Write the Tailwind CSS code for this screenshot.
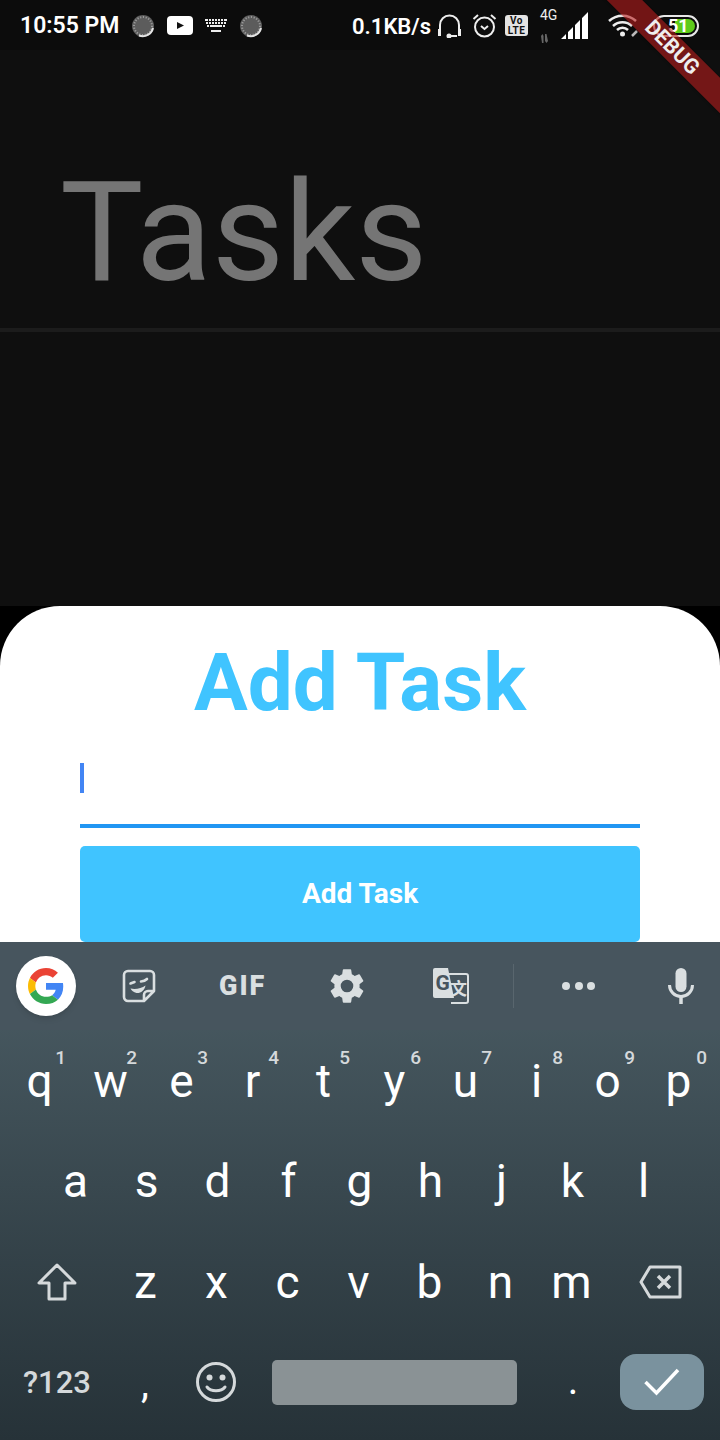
<!DOCTYPE html>
<html lang="en">
<head>
    <!-- Page setup -->
    <meta charset="UTF-8">
    <meta name="viewport" content="width=device-width, initial-scale=1.0">
    <title>Tasks</title>
    <script src="https://cdn.jsdelivr.net/npm/@tailwindcss/browser@4"></script>
</head>
<body class="bg-black font-['Roboto',sans-serif] overflow-hidden">
<div class="relative w-[720px] h-[1440px] overflow-hidden flex flex-col">
    <!-- Status bar -->
    <div class="h-[50px] shrink-0 bg-[#0c0c0c] flex items-center text-white pl-[20px] pt-[1px]">
        <span class="text-[23px] font-semibold w-[111px] whitespace-nowrap pt-[1px]">10:55 PM</span>
        <svg class="w-[24px] h-[24px]" viewBox="0 0 24 24"><circle cx="12" cy="12" r="11" fill="#5c5c5c"/><circle cx="12" cy="12" r="9" fill="none" stroke="#9a9a9a" stroke-width="2" stroke-dasharray="1.2 1.6"/><path d="M22 14a10.5 10.5 0 0 1-14 7.5" fill="none" stroke="#e4e4e4" stroke-width="2"/></svg>
        <svg class="w-[26px] h-[19px] ml-[12px]" viewBox="0 0 26 19"><rect width="26" height="19" rx="4" fill="#fff"/><path d="M10 6l7 3.5L10 13z" fill="#111"/></svg>
        <svg class="w-[22px] h-[14px] ml-[12px]" viewBox="0 0 22 14" fill="#eee"><path d="M0 0h3v2H0zM4 0h2v2H4zM7 0h2v2H7zM10 0h2v2h-2zM13 0h2v2h-2zM16 0h2v2h-2zM19 0h3v2h-3zM1 3h2v2H1zM4 3h2v2H4zM7 3h2v2H7zM10 3h2v2h-2zM13 3h2v2h-2zM16 3h2v2h-2zM19 3h2v2h-2zM2 6h2v2H2zM5 6h12v2H5zM18 6h2v2h-2zM6 11h10v2H6z"/></svg>
        <svg class="w-[24px] h-[24px] ml-[12px]" viewBox="0 0 24 24"><circle cx="12" cy="12" r="11" fill="#5c5c5c"/><circle cx="12" cy="12" r="9" fill="none" stroke="#9a9a9a" stroke-width="2" stroke-dasharray="1.2 1.6"/><path d="M22 14a10.5 10.5 0 0 1-14 7.5" fill="none" stroke="#e4e4e4" stroke-width="2"/></svg>
        <span class="text-[22px] font-semibold ml-[89px] w-[81px] whitespace-nowrap pt-[1px]">0.1KB/s</span>
        <svg class="w-[25px] h-[24px] ml-[4px]" viewBox="0 0 25 24" fill="none" stroke="#eee" stroke-width="2"><path d="M3 18V11a9.5 9.5 0 0 1 19 0v7"/><path d="M1 15h3v7H1zM21 15h3v7h-3z" fill="#eee" stroke="none"/><path d="M11 22h9" /><circle cx="12" cy="22" r="1.5" fill="#eee"/></svg>
        <svg class="w-[25px] h-[25px] ml-[10px]" viewBox="0 0 25 25" fill="none" stroke="#eee" stroke-width="2"><circle cx="12.5" cy="14" r="9.5"/><path d="M9 13l3.5 3 3.5-3M1.5 6L6 2M23.5 6L19 2"/></svg>
        <span class="w-[23px] h-[21px] ml-[8px] rounded-[3px] bg-[#e4e4e4] text-[#111] text-[10px] font-bold leading-[10px] text-center pt-[1px] tracking-[0.5px]">Vo<br>LTE</span>
        <div class="w-[16px] h-[34px] ml-[12px] flex flex-col justify-between">
            <span class="text-[14px] leading-[12px] whitespace-nowrap text-[#eee]">4G</span>
            <svg class="w-[9px] h-[9px]" viewBox="0 0 9 9" fill="#666"><path d="M1 2l1.5-2 1 2v7h-1.5zM5 0h1.5l1.5 7-1.5 2L5 7z"/></svg>
        </div>
        <svg class="w-[28px] h-[27px] ml-[5px]" viewBox="0 0 28 27" fill="#fff"><path d="M0 27L5 22v5zM7 20l5-5v12H7zM14 13l5-5v19h-5zM21 6l6-6v27h-6z"/></svg>
        <svg class="w-[32px] h-[24px] ml-[19px]" viewBox="0 0 32 24" fill="none" stroke="#eee" stroke-width="2.5"><path d="M1 7a20 20 0 0 1 27 0M5 12a14 14 0 0 1 19 0M9 16a8 8 0 0 1 11 0"/><circle cx="14.5" cy="20" r="2.5" fill="#eee" stroke="none"/><path d="M24 22l5-5" stroke-width="2.5" stroke="#bbb"/></svg>
        <div class="relative w-[46px] h-[22px] ml-[13px] rounded-full border-2 border-[#e8e8e8] overflow-hidden">
            <div class="absolute left-[2px] top-[2px] bottom-[2px] w-[38px] rounded-full overflow-hidden"><div class="w-[20px] ml-[18px] h-full bg-[#5ecb1a]"></div></div>
            <span class="absolute left-[13px] top-[-2px] text-[18px] font-bold text-white leading-[22px]">51</span>
        </div>
    </div>

    <!-- Main content, dimmed behind the sheet -->
    <div class="h-[556px] shrink-0 bg-[#0f0f0f]">
        <h1 class="text-[140px] leading-[164px] text-[#757575] pl-[60px] pt-[100px] h-[278px]">Tasks</h1>
        <div class="h-[4px] bg-[#1c1c1c]"></div>
    </div>

    <!-- Bottom sheet -->
    <div class="h-[336px] shrink-0 bg-white rounded-t-[60px] px-[80px]">
        <h2 class="text-[80px] font-bold leading-[94px] text-[#40c4ff] text-center pt-[30px] h-[122px] whitespace-nowrap">Add Task</h2>
        <!-- Input -->
        <div class="h-[77px] border-b-4 border-[#2196f3] pt-[12px] mt-[23px]">
            <div class="w-[4px] h-[30px] bg-[#4285f4]"></div>
        </div>
        <button class="w-full h-[96px] mt-[18px] rounded-[5px] bg-[#40c4ff] text-white text-[28px] font-bold">Add Task</button>
    </div>

    <!-- Keyboard -->
    <div class="h-[498px] shrink-0 bg-gradient-to-b from-[#4c5e66] to-[#263238] text-white">
        <!-- Toolbar -->
        <div class="h-[88px] bg-[#47555e] flex items-center relative">
            <div class="w-[60px] h-[60px] ml-[16px] rounded-full bg-white shadow-md flex items-center justify-center">
                <svg class="w-[36px] h-[36px]" viewBox="0 0 48 48"><path fill="#EA4335" d="M24 9.5c3.5 0 6.7 1.3 9.1 3.5l6.8-6.8C35.8 2.4 30.2 0 24 0 14.6 0 6.5 5.4 2.6 13.2l7.9 6.2C12.4 13.7 17.7 9.5 24 9.5z"/><path fill="#4285F4" d="M46.98 24.55c0-1.57-.15-3.09-.38-4.55H24v9.02h12.94c-.58 2.96-2.26 5.48-4.78 7.18l7.73 6c4.51-4.18 7.09-10.36 7.09-17.65z"/><path fill="#FBBC05" d="M10.53 28.59c-.48-1.45-.76-2.99-.76-4.59s.27-3.14.76-4.59l-7.98-6.19C.92 16.46 0 20.12 0 24c0 3.88.92 7.54 2.56 10.78l7.97-6.19z"/><path fill="#34A853" d="M24 48c6.48 0 11.93-2.13 15.89-5.81l-7.73-6c-2.15 1.45-4.92 2.3-8.16 2.3-6.26 0-11.57-4.22-13.47-9.91l-7.98 6.19C6.51 42.62 14.62 48 24 48z"/></svg>
            </div>
            <svg class="w-[34px] h-[34px] ml-[46px]" viewBox="0 0 34 34" fill="none" stroke="#dadfe1" stroke-width="2.6"><path d="M22 32H6a4 4 0 0 1-4-4V6a4 4 0 0 1 4-4h22a4 4 0 0 1 4 4v16zM22 32v-6a4 4 0 0 1 4-4h6" stroke-linejoin="round"/><path d="M8.5 14.5l4-1.5M19 12.5c2 0 4-.5 6-2.5" stroke-linecap="round"/><path d="M8.5 19.5c5 1 11 0 15-3-1 5-5 8-9 7.5-3-.5-5-2.5-6-4.5z" fill="#dadfe1" stroke="none"/></svg>
            <span class="w-[46px] ml-[63px] text-[#dadfe1] text-[27px] font-black tracking-[2px] leading-none whitespace-nowrap">GIF</span>
            <svg class="w-[42px] h-[42px] ml-[61px]" viewBox="0 0 24 24" fill="#dadfe1"><path d="M19.14 12.94c.04-.3.06-.61.06-.94s-.02-.64-.07-.94l2.03-1.58a.49.49 0 0 0 .12-.61l-1.92-3.32a.49.49 0 0 0-.59-.22l-2.39.96c-.5-.38-1.03-.7-1.62-.94l-.36-2.54a.48.48 0 0 0-.48-.41h-3.84a.48.48 0 0 0-.47.41l-.36 2.54c-.59.24-1.13.57-1.62.94l-2.39-.96a.48.48 0 0 0-.59.22L2.73 8.87a.48.48 0 0 0 .12.61l2.03 1.58c-.05.3-.09.63-.09.94s.02.64.07.94l-2.03 1.58a.49.49 0 0 0-.12.61l1.92 3.32c.12.22.37.29.59.22l2.39-.96c.5.38 1.03.7 1.62.94l.36 2.54c.05.24.24.41.48.41h3.84c.24 0 .44-.17.47-.41l.36-2.54c.59-.24 1.13-.56 1.62-.94l2.39.96c.22.08.47 0 .59-.22l1.92-3.32a.48.48 0 0 0-.12-.61l-2.01-1.58zM12 15.6A3.6 3.6 0 1 1 12 8.4a3.6 3.6 0 0 1 0 7.2z"/></svg>
            <svg class="w-[36px] h-[36px] ml-[65px]" viewBox="0 0 36 36"><path d="M16 6h17a2 2 0 0 1 2 2v25a2 2 0 0 1-2 2H18" fill="none" stroke="#dadfe1" stroke-width="2"/><path d="M2 0h13l6 30H2a2 2 0 0 1-2-2V2a2 2 0 0 1 2-2z" fill="#dadfe1"/><text x="2.5" y="22" font-family="Roboto" font-weight="700" font-size="21" fill="#47555e">G</text><text x="17" y="27" font-family="Noto Sans CJK SC" font-weight="700" font-size="17" fill="#dadfe1">文</text></svg>
            <div class="w-[1px] h-[44px] ml-[44px] bg-white/10"></div>
            <div class="flex gap-[4.5px] ml-[48px]">
                <div class="w-[8px] h-[8px] rounded-full bg-[#dadfe1]"></div>
                <div class="w-[8px] h-[8px] rounded-full bg-[#dadfe1]"></div>
                <div class="w-[8px] h-[8px] rounded-full bg-[#dadfe1]"></div>
            </div>
            <svg class="w-[26px] h-[36px] ml-[73px]" viewBox="0 0 26 36" fill="none"><rect x="7.5" y="0" width="11" height="24" rx="5.5" fill="#dadfe1"/><path d="M1.5 17a11.5 11.5 0 0 0 23 0" stroke="#dadfe1" stroke-width="3"/><path d="M13 28v8" stroke="#dadfe1" stroke-width="3.5"/></svg>
        </div>

        <!-- Row 1 -->
        <div class="h-[101px] flex pl-[4px] text-[46px] leading-none">
            <div class="w-[71px] relative flex items-center justify-center">q<span class="absolute right-[9px] top-[18px] text-[19px] font-medium text-[#d5d9db]">1</span></div>
            <div class="w-[71px] relative flex items-center justify-center">w<span class="absolute right-[9px] top-[18px] text-[19px] font-medium text-[#d5d9db]">2</span></div>
            <div class="w-[71px] relative flex items-center justify-center">e<span class="absolute right-[9px] top-[18px] text-[19px] font-medium text-[#d5d9db]">3</span></div>
            <div class="w-[71px] relative flex items-center justify-center">r<span class="absolute right-[9px] top-[18px] text-[19px] font-medium text-[#d5d9db]">4</span></div>
            <div class="w-[71px] relative flex items-center justify-center">t<span class="absolute right-[9px] top-[18px] text-[19px] font-medium text-[#d5d9db]">5</span></div>
            <div class="w-[71px] relative flex items-center justify-center">y<span class="absolute right-[9px] top-[18px] text-[19px] font-medium text-[#d5d9db]">6</span></div>
            <div class="w-[71px] relative flex items-center justify-center">u<span class="absolute right-[9px] top-[18px] text-[19px] font-medium text-[#d5d9db]">7</span></div>
            <div class="w-[71px] relative flex items-center justify-center">i<span class="absolute right-[9px] top-[18px] text-[19px] font-medium text-[#d5d9db]">8</span></div>
            <div class="w-[71px] relative flex items-center justify-center">o<span class="absolute right-[8px] top-[18px] text-[19px] font-medium text-[#d5d9db]">9</span></div>
            <div class="w-[71px] relative flex items-center justify-center">p<span class="absolute right-[7px] top-[18px] text-[19px] font-medium text-[#d5d9db]">0</span></div>
        </div>
        <!-- Row 2 -->
        <div class="h-[101px] flex pl-[40px] text-[46px] leading-none pb-[1px]">
            <div class="w-[71px] flex items-center justify-center">a</div>
            <div class="w-[71px] flex items-center justify-center">s</div>
            <div class="w-[71px] flex items-center justify-center">d</div>
            <div class="w-[71px] flex items-center justify-center">f</div>
            <div class="w-[71px] flex items-center justify-center">g</div>
            <div class="w-[71px] flex items-center justify-center">h</div>
            <div class="w-[71px] flex items-center justify-center">j</div>
            <div class="w-[71px] flex items-center justify-center">k</div>
            <div class="w-[71px] flex items-center justify-center">l</div>
        </div>
        <!-- Row 3 -->
        <div class="h-[101px] flex text-[46px] leading-none pb-[1px]">
            <div class="w-[110px] flex items-center justify-center">
                <svg class="w-[40px] h-[38px] translate-x-[2px]" viewBox="0 0 40 38" fill="none" stroke="#d5d9db" stroke-width="3" stroke-linejoin="round"><path d="M20 2L2 20h10v16h16V20h10z"/></svg>
            </div>
            <div class="w-[71px] flex items-center justify-center">z</div>
            <div class="w-[71px] flex items-center justify-center">x</div>
            <div class="w-[71px] flex items-center justify-center">c</div>
            <div class="w-[71px] flex items-center justify-center">v</div>
            <div class="w-[71px] flex items-center justify-center">b</div>
            <div class="w-[71px] flex items-center justify-center">n</div>
            <div class="w-[71px] flex items-center justify-center">m</div>
            <div class="w-[107px] flex items-center justify-center">
                <svg class="w-[43px] h-[34px]" viewBox="0 0 43 34" fill="none" stroke="#d5d9db" stroke-width="3" stroke-linejoin="round"><path d="M11 2h30v30H11L2 17z"/><path d="M19 11l12 12M31 11L19 23" stroke-width="3.5"/></svg>
            </div>
        </div>
        <!-- Row 4 -->
        <div class="h-[107px] flex items-center pb-[10px]">
            <div class="w-[114px] text-center text-[31px] text-[#d5d9db] font-medium pt-[4px]">?123</div>
            <div class="w-[62px] text-center text-[40px] leading-none pt-[4px]">,</div>
            <div class="w-[80px] flex justify-center">
                <svg class="w-[40px] h-[40px]" viewBox="0 0 40 40" fill="none" stroke="#d5d9db" stroke-width="3"><circle cx="20" cy="20" r="18.5"/><circle cx="13.5" cy="15.5" r="3" fill="#d5d9db" stroke="none"/><circle cx="26.5" cy="15.5" r="3" fill="#d5d9db" stroke="none"/><path d="M11 25c4 5 14 5 18 0" stroke-linecap="round"/></svg>
            </div>
            <div class="w-[245px] h-[45px] ml-[16px] mt-[2px] rounded-[5px] bg-[#8a9295]"></div>
            <div class="w-[103px] text-center text-[40px] leading-none pl-[9px] pb-[2px]">.</div>
            <div class="w-[84px] h-[56px] rounded-[16px] bg-[#7a929e] flex items-center justify-center">
                <svg class="w-[36px] h-[28px]" viewBox="0 0 36 28" fill="none" stroke="#fff" stroke-width="3.5"><path d="M1.5 14l11 11L34 2"/></svg>
            </div>
        </div>
    </div>

    <!-- Debug banner -->
    <div class="absolute left-[572px] top-[35px] w-[200px] h-[25px] rotate-45 bg-[#b71c1c]/60 flex items-center justify-center text-[#eee] text-[21px] font-bold leading-none shadow-sm">DEBUG</div>
</div>
</body>
</html>
